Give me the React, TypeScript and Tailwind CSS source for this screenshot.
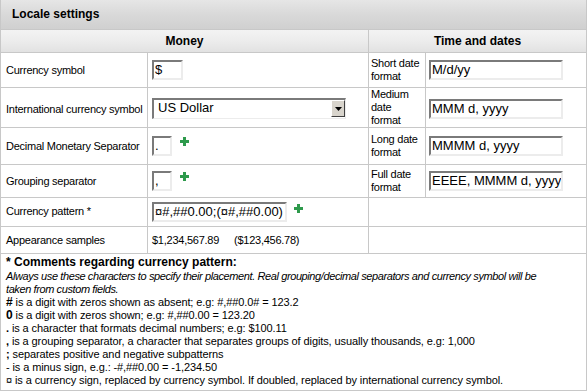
import React from "react";

const font = "font-['Liberation_Sans',Arial,sans-serif]";

function Plus() {
  return (
    <svg width="9" height="9" viewBox="0 0 9 9" className="shrink-0">
      <rect x="3" y="0" width="3" height="9" fill="#2e9a4c" />
      <rect x="0" y="3" width="9" height="3" fill="#2e9a4c" />
    </svg>
  );
}

function Field({ value, width }: { value: string; width: string }) {
  return (
    <div
      className={`${width} h-[20px] bg-white border-2 border-t-[#7a7a7a] border-l-[#7a7a7a] border-r-[#ececec] border-b-[#ececec] overflow-hidden whitespace-nowrap text-[13px] leading-[16px] pl-[1px] text-black tracking-normal`}
    >
      {value}
    </div>
  );
}

export default function App() {
  return (
    <div className={`w-[587px] h-[392px] overflow-hidden bg-white text-[11px] leading-[13px] tracking-[-0.25px] text-black ${font}`}>
      <div className="border-l border-r border-b border-[#c8c8c8]">
        <div className="h-[30px] flex items-center px-[11px] font-bold text-[12px] tracking-normal border-b border-[#c8c8c8] bg-gradient-to-b from-[#e6e6e6] via-[#d9d9d9] to-[#d0d0d0]">
          Locale settings
        </div>
        <div className="grid grid-cols-[147px_221px_57px_1fr] grid-rows-[23px_35px_40px_37px_33px_29px_27px]">
          <div className="col-span-2 flex items-center justify-center font-bold text-[12px] tracking-normal border-r border-b border-[#c8c8c8] bg-gradient-to-b from-[#f3f3f3] via-[#ececec] to-[#e2e2e2]">
            Money
          </div>
          <div className="col-span-2 flex items-center justify-center font-bold text-[12px] tracking-normal border-b border-[#c8c8c8] bg-gradient-to-b from-[#f3f3f3] via-[#ececec] to-[#e2e2e2]">
            Time and dates
          </div>

          {/* row 1 */}
          <div className="flex items-center px-[5px] border-r border-b border-[#c8c8c8]">Currency symbol</div>
          <div className="flex items-center pl-[4px] border-r border-b border-[#c8c8c8]">
            <Field value="$" width="w-[31px]" />
          </div>
          <div className="flex items-center px-[2px] border-r border-b border-[#c8c8c8] overflow-hidden">Short date format</div>
          <div className="flex items-center pl-[3px] border-b border-[#c8c8c8]">
            <Field value="M/d/yy" width="w-[134px]" />
          </div>

          {/* row 2 */}
          <div className="flex items-center px-[5px] border-r border-b border-[#c8c8c8] pt-[3px] whitespace-nowrap">International currency symbol</div>
          <div className="flex items-center pl-[4px] border-r border-b border-[#c8c8c8] pt-[2px]">
            <div className="w-[194px] h-[21px] flex bg-white border-t-2 border-l-2 border-r border-b border-t-[#7a7a7a] border-l-[#7a7a7a] border-r-[#ececec] border-b-[#ececec] text-[13px] leading-[16px] tracking-normal">
              <span className="flex-1 pl-[4px]">US Dollar</span>
              <span className="w-[14px] h-[17px] bg-[#d8d4cc] border border-t-white border-l-white border-r-[#404040] border-b-[#404040] flex items-center justify-center">
                <svg width="7" height="4" viewBox="0 0 7 4">
                  <path d="M0 0h7L3.5 4z" fill="#000" />
                </svg>
              </span>
            </div>
          </div>
          <div className="flex items-center px-[2px] border-r border-b border-[#c8c8c8] overflow-hidden">Medium date format</div>
          <div className="flex items-center pl-[3px] border-b border-[#c8c8c8] pt-[2px]">
            <Field value="MMM d, yyyy" width="w-[134px]" />
          </div>

          {/* row 3 */}
          <div className="flex items-center px-[5px] border-r border-b border-[#c8c8c8] whitespace-nowrap">Decimal Monetary Separator</div>
          <div className="flex items-center gap-[8px] pl-[4px] border-r border-b border-[#c8c8c8]">
            <Field value="." width="w-[20px]" />
            <span className="-mt-[9px]"><Plus /></span>
          </div>
          <div className="flex items-center px-[2px] border-r border-b border-[#c8c8c8] overflow-hidden">Long date format</div>
          <div className="flex items-center pl-[3px] border-b border-[#c8c8c8]">
            <Field value="MMMM d, yyyy" width="w-[134px]" />
          </div>

          {/* row 4 */}
          <div className="flex items-center px-[5px] border-r border-b border-[#c8c8c8]">Grouping separator</div>
          <div className="flex items-center gap-[8px] pl-[4px] border-r border-b border-[#c8c8c8]">
            <Field value="," width="w-[20px]" />
            <span className="-mt-[9px]"><Plus /></span>
          </div>
          <div className="flex items-center px-[2px] border-r border-b border-[#c8c8c8] overflow-hidden">Full date format</div>
          <div className="flex items-center pl-[3px] border-b border-[#c8c8c8]">
            <Field value="EEEE, MMMM d, yyyy" width="w-[134px]" />
          </div>

          {/* row 5 */}
          <div className="flex items-center px-[5px] border-r border-b border-[#c8c8c8] pb-[2px]">Currency pattern *</div>
          <div className="flex items-center gap-[7px] pl-[4px] border-r border-b border-[#c8c8c8]">
            <Field value="¤#,##0.00;(¤#,##0.00)" width="w-[135px]" />
            <span className="-mt-[8px]"><Plus /></span>
          </div>
          <div className="col-span-2 border-b border-[#c8c8c8]" />

          {/* row 6 */}
          <div className="flex items-center px-[5px] border-r border-b border-[#c8c8c8]">Appearance samples</div>
          <div className="flex items-center pl-[4px] border-r border-b border-[#c8c8c8]">
            <span className="w-[82px]">$1,234,567.89</span>
            <span>($123,456.78)</span>
          </div>
          <div className="col-span-2 border-b border-[#c8c8c8]" />
        </div>

        <div className="h-[136px] px-[5px] pt-[1px] tracking-[-0.1px]">
          <div className="font-bold text-[12px] leading-[15px] tracking-normal">* Comments regarding currency pattern:</div>
          <div className="italic tracking-[-0.4px]">
            Always use these characters to specify their placement. Real grouping/decimal separators and currency symbol will be
            <br />
            taken from custom fields.
          </div>
          <div><b className="text-[12px]">#</b> is a digit with zeros shown as absent; e.g: #,##0.0# = 123.2</div>
          <div><b className="text-[12px]">0</b> is a digit with zeros shown; e.g: #,##0.00 = 123.20</div>
          <div><b>.</b> is a character that formats decimal numbers; e.g: $100.11</div>
          <div><b>,</b> is a grouping separator, a character that separates groups of digits, usually thousands, e.g: 1,000</div>
          <div><b>;</b> separates positive and negative subpatterns</div>
          <div>- is a minus sign, e.g.: -#,##0.00 = -1,234.50</div>
          <div>¤ is a currency sign, replaced by currency symbol. If doubled, replaced by international currency symbol.</div>
        </div>
      </div>
    </div>
  );
}
